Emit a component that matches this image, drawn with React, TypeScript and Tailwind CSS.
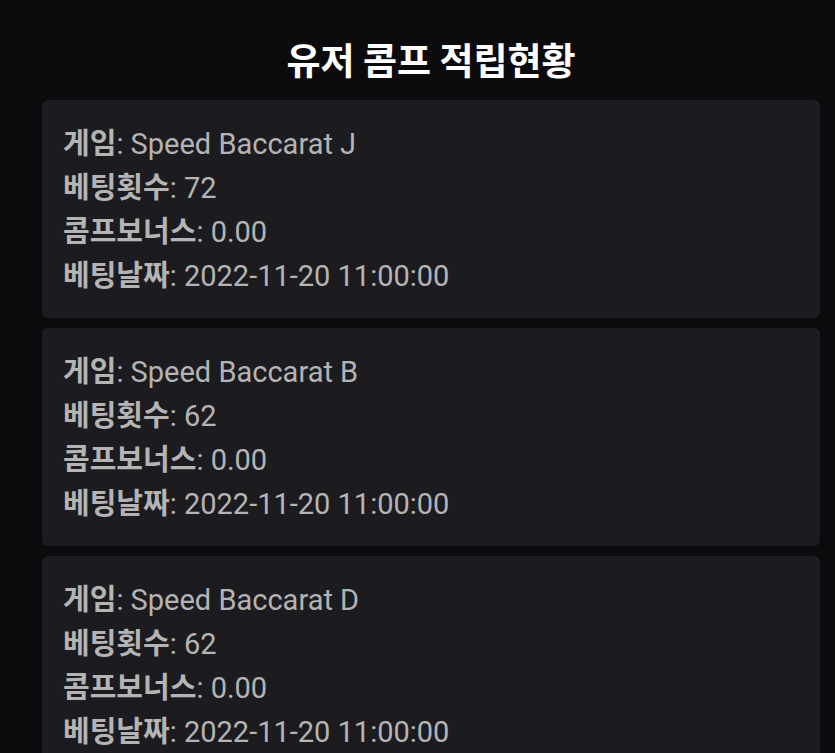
import React from "react";

const items = [
  { game: "Speed Baccarat J", count: "72", bonus: "0.00", date: "2022-11-20 11:00:00" },
  { game: "Speed Baccarat B", count: "62", bonus: "0.00", date: "2022-11-20 11:00:00" },
  { game: "Speed Baccarat D", count: "62", bonus: "0.00", date: "2022-11-20 11:00:00" },
];

function Row({ label, value }: { label: string; value: string }) {
  return (
    <div className="h-[44px] leading-[44px] whitespace-nowrap">
      <span className="font-bold">{label}</span>: {value}
    </div>
  );
}

export default function App() {
  return (
    <div
      className="h-[753px] overflow-hidden bg-[#0b0b0d]"
      style={{ fontFamily: "Roboto, 'Noto Sans CJK KR', sans-serif" }}
    >
      <div className="ml-[42px] mr-[15px]">
        <h1
          className="pt-[32px] h-[100px] text-center text-[37px] leading-[54px] font-bold text-white"
          style={{ fontFamily: "'Noto Sans CJK KR', sans-serif" }}
        >
          유저 콤프 적립현황
        </h1>
        <div className="flex flex-col gap-[10px]">
          {items.map((it, i) => (
            <div
              key={i}
              className="rounded-[6px] bg-[#1c1c20] px-[21px] pt-[22px] pb-[20px] text-[29px] text-[#b4b4b4]"
            >
              <Row label="게임" value={it.game} />
              <Row label="베팅횟수" value={it.count} />
              <Row label="콤프보너스" value={it.bonus} />
              <Row label="베팅날짜" value={it.date} />
            </div>
          ))}
        </div>
      </div>
    </div>
  );
}
